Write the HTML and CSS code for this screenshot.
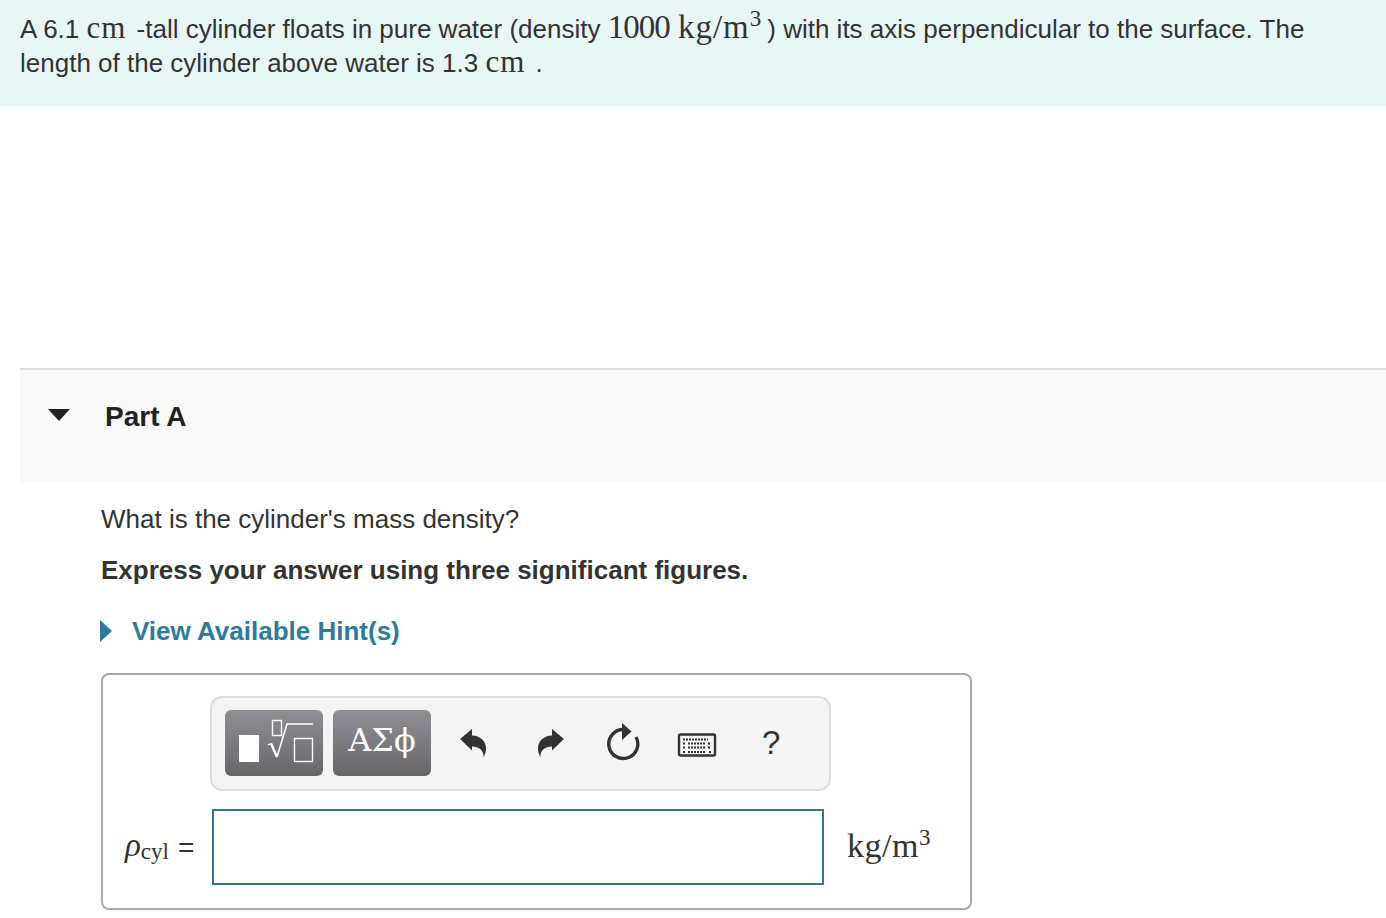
FILE: index.html
```html
<!DOCTYPE html>
<html lang="en">
<head>
    <meta charset="UTF-8">
    <meta name="viewport" content="width=device-width, initial-scale=1.0">
    <title>Part A</title>
    <link rel="stylesheet" href="styles.css">
</head>
<body>
    <div class="intro">
        <p class="intro-line">A 6.1 <span class="math unit">cm</span> -tall cylinder floats in pure water (density <span class="math big"><span class="digits">1000</span> <span class="big-unit">kg/m<sup>3</sup></span></span>) with its axis perpendicular to the surface. The</p>
        <p class="intro-line">length of the cylinder above water is 1.3 <span class="math unit">cm</span> .</p>
    </div>

    <div class="part-head">
        <span class="arrow-down"></span>
        <h2>Part A</h2>
    </div>

    <div class="part-body">
        <p class="question">What is the cylinder's mass density?</p>
        <p class="instruction">Express your answer using three significant figures.</p>
        <div class="hint">
            <span class="arrow-right"></span>
            <a class="hint-link">View Available Hint(s)</a>
        </div>

        <div class="answer-box">
            <div class="toolbar">
                <button class="tool-btn templates">
                    <svg width="98" height="66" viewBox="0 0 98 66">
                        <rect x="14" y="25" width="20" height="27" fill="#fff"/>
                        <rect x="47.500" y="10.500" width="9" height="15" fill="none" stroke="#fff" stroke-width="1.400"/>
                        <path d="M43 35l3-1.500" fill="none" stroke="#fff" stroke-width="1.200"/>
                        <path d="M46 33.500l6 13.500" fill="none" stroke="#fff" stroke-width="2.400"/>
                        <path d="M52 47l10-33h26" fill="none" stroke="#fff" stroke-width="1.500"/>
                        <rect x="69.500" y="28.500" width="18" height="23" fill="none" stroke="#fff" stroke-width="1.400"/>
                    </svg>
                </button>
                <button class="tool-btn symbols">ΑΣϕ</button>
                <svg class="tool-icon undo" width="30" height="34" viewBox="0 0 30 34">
                    <path d="M1 13L13 3v6.500c8 .5 14 5 14 13 0 3-1 6-2.500 9 .5-6-3-11-11.500-11v4z" fill="#333"/>
                </svg>
                <svg class="tool-icon redo" width="30" height="34" viewBox="0 0 30 34">
                    <path d="M29 13L17 3v6.500c-8 .5-14 5-14 13 0 3 1 6 2.500 9-.5-6 3-11 11.500-11v4z" fill="#333"/>
                </svg>
                <svg class="tool-icon reset" width="36" height="40" viewBox="0 0 36 40">
                    <path d="M19 6.500A14.500 14.500 0 1 0 31 14" fill="none" stroke="#333" stroke-width="3.400"/>
                    <path d="M17 0l9.500 8.500L17 17z" fill="#333"/>
                </svg>
                <svg class="tool-icon keyboard" width="40" height="26" viewBox="0 0 40 26">
                    <rect x="2" y="2.500" width="36" height="21" rx="1.500" fill="#f4f4f4" stroke="#333" stroke-width="2.400"/>
                    <path d="M6 7.500h25M6 11.500h3M11 11.500h17M31 11.500h3M6 15.500h3M11 15.500h17M31 15.500h3M6 20h3M11 20h18M32 20h2" stroke="#333" stroke-width="2" stroke-dasharray="2 1" fill="none"/>
                </svg>
                <span class="help">?</span>
            </div>
            <div class="answer-row">
                <span class="math var"><i>ρ</i><sub>cyl</sub></span>
                <span class="equals">=</span>
                <input class="answer-input" type="text">
                <span class="math answer-unit">kg/m<sup>3</sup></span>
            </div>
        </div>
    </div>
</body>
</html>
```

FILE: styles.css
```css
* {
    box-sizing: border-box;
}
body {
    margin: 0;
    color: #333;
    background: #fff;
    font-family: "Liberation Sans", Arial, sans-serif;
    font-size: 26px;
    overflow: hidden;
}
p {
    margin: 0;
}
sup, sub {
    line-height: 0;
}
.math {
    font-family: "Liberation Serif", "Times New Roman", serif;
}
.intro {
    height: 106px;
    padding: 10px 20px 0;
    background: #e9f6f6;
}
.intro-line {
    height: 35px;
    line-height: 34px;
    white-space: nowrap;
}
.unit {
    margin-right: 3px;
    font-size: 31px;
    letter-spacing: 1px;
}
.big {
    margin-right: 5px;
    font-size: 33px;
}
.digits {
    letter-spacing: -1px;
}
.big-unit {
    letter-spacing: 1px;
}
.big sup {
    font-size: 23px;
}
.part-head {
    display: flex;
    align-items: flex-start;
    height: 115px;
    margin: 262px 0 0 20px;
    padding: 30px 0 0 28px;
    background: #f9f9f9;
    border-top: 2px solid #ddd;
}
.part-head h2 {
    margin: 0 0 0 35px;
    font-size: 28px;
    line-height: 34px;
    color: #222;
}
.arrow-down {
    width: 0;
    height: 0;
    margin-top: 9px;
    border-left: 11px solid transparent;
    border-right: 11px solid transparent;
    border-top: 12px solid #222;
}
.part-body {
    padding: 19px 0 0 101px;
}
.question {
    line-height: 34px;
}
.instruction {
    margin-top: 17px;
    line-height: 34px;
    font-weight: bold;
}
.hint {
    display: flex;
    align-items: center;
    margin-top: 27px;
    height: 34px;
}
.arrow-right {
    width: 0;
    height: 0;
    margin-left: -1px;
    border-top: 11px solid transparent;
    border-bottom: 11px solid transparent;
    border-left: 12px solid #2f7a9c;
}
.hint-link {
    margin-left: 20px;
    font-weight: bold;
    color: #2f7a9c;
}
.answer-box {
    width: 871px;
    height: 237px;
    margin-top: 25px;
    padding: 21px 0 0 107px;
    border: 2px solid #aaa;
    border-radius: 8px;
}
.toolbar {
    display: flex;
    align-items: center;
    width: 621px;
    height: 95px;
    padding: 0 0 2px 13px;
    background: #f4f4f4;
    border: 2px solid #ddd;
    border-radius: 12px;
}
.tool-btn {
    width: 98px;
    height: 66px;
    padding: 0;
    border: none;
    border-radius: 6px;
    color: #fff;
    background: linear-gradient(#8f8f96, #66666a);
}
.symbols {
    margin-left: 10px;
    padding-bottom: 6px;
    font-family: "DejaVu Serif", "Liberation Serif", serif;
    font-size: 32px;
}
.templates svg {
    display: block;
}
.tool-icon {
    flex: none;
}
.undo {
    margin-left: 28px;
}
.redo {
    margin-left: 46px;
}
.reset {
    margin-left: 40px;
}
.keyboard {
    margin: 5px 0 0 36px;
}
.help {
    margin-left: 45px;
    font-size: 33px;
}
.answer-row {
    display: flex;
    align-items: center;
    height: 76px;
    margin: 18px 0 0 -87px;
}
.var {
    width: 53px;
    margin: 0 0 3px 2px;
    font-size: 33px;
}
.var sub {
    font-size: 23px;
    vertical-align: -3px;
}
.equals {
    width: 34px;
    margin-top: 1px;
    font-size: 28px;
}
.answer-input {
    width: 612px;
    height: 76px;
    border: 2px solid #3a7590;
    background: #fff;
}
.answer-unit {
    margin: 0 0 2px 23px;
    font-size: 34px;
    letter-spacing: .5px;
}
.answer-unit sup {
    font-size: 23px;
}
```
